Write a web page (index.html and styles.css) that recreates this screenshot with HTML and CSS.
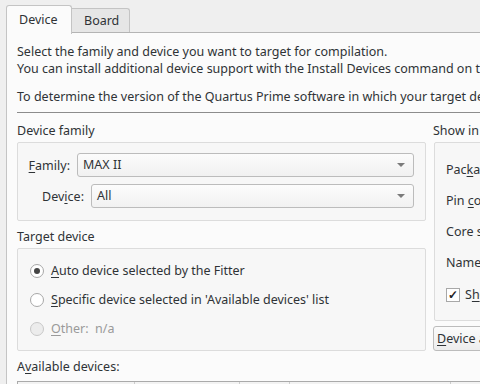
FILE: index.html
```html
<!DOCTYPE html>
<html lang="en">
<head>
  <meta charset="UTF-8">
  <title>Device</title>
  <link rel="stylesheet" href="styles.css">
</head>
<body>
  <!-- 탭 -->
  <div class="tabs">
    <div class="tab active">Device</div>
    <div class="tab">Board</div>
  </div>

  <div class="pane">
    <p class="intro">Select the family and device you want to target for compilation.<br>You can install additional device support with the Install Devices command on the Tools menu.</p>
    <p class="intro second">To determine the version of the Quartus Prime software in which your target device is supported, refer to the Device Support List webpage.</p>
    <hr class="sep">

    <div class="columns">
      <div class="left">
        <div class="group-title">Device family</div>
        <div class="group family-box">
          <div class="row">
            <label class="lbl"><u>F</u>amily:</label>
            <div class="combo">MAX II<span class="arrow"></span></div>
          </div>
          <div class="row">
            <label class="lbl">Dev<u>i</u>ce:</label>
            <div class="combo">All<span class="arrow"></span></div>
          </div>
        </div>

        <div class="group-title target-title">Target device</div>
        <div class="group target-box">
          <div class="radio-row"><span class="radio checked"></span><span><u>A</u>uto device selected by the Fitter</span></div>
          <div class="radio-row"><span class="radio"></span><span><u>S</u>pecific device selected in 'Available devices' list</span></div>
          <div class="radio-row disabled"><span class="radio"></span><span><u>O</u>ther:&nbsp; n/a</span></div>
        </div>

        <div class="group-title avail">A<u>v</u>ailable devices:</div>
        <div class="table-head">
          <div class="th" style="width:116px"></div>
          <div class="th" style="width:104px"></div>
          <div class="th" style="width:49px"></div>
          <div class="th" style="width:160px"></div>
        </div>
      </div>

      <div class="right">
        <div class="group-title">Show in 'Available devices' list</div>
        <div class="group show-box">
          <div class="opt">Pac<u>k</u>age:</div>
          <div class="opt">Pin <u>c</u>ount:</div>
          <div class="opt">Core speed grade:</div>
          <div class="opt">Name filter:</div>
          <div class="check-row"><span class="check">&#10003;</span><span>S<u>h</u>ow advanced devices</span></div>
        </div>
        <div class="button"><u>D</u>evice and Pin Options...</div>
      </div>
    </div>
  </div>
</body>
</html>
```

FILE: styles.css
```css
/* 공통 스타일 */
body {
  margin: 0;
  width: 480px;
  height: 384px;
  overflow: hidden;
  background-color: #efefef;
  font-family: 'Noto Sans', sans-serif;
  font-size: 12.5px;
  color: #2f3336;
}

u {
  text-decoration-thickness: 1px;
  text-underline-offset: 2px;
}

/* 탭 */
.tabs {
  display: flex;
  padding: 5px 0 0 6px;
  height: 27px;
  box-sizing: content-box;
}

.tab {
  margin-top: 3px;
  padding: 0 12px 0 12px;
  width: 33px;
  line-height: 24px;
  border: 1px solid #c4c4c4;
  border-bottom: none;
  border-left: none;
  border-radius: 0 3px 0 0;
  background-color: #e6e6e6;
}

.tab.active {
  margin-top: 0;
  line-height: 27px;
  width: 40px;
  border-left: 1px solid #c4c4c4;
  border-radius: 3px 3px 0 0;
  background-color: #fbfbfb;
  position: relative;
  z-index: 1;
  height: 28px;
}

.pane {
  margin-left: 6px;
  border-top: 1px solid #b4b4b4;
  border-left: 1px solid #c4c4c4;
  background-color: #fbfbfb;
  padding: 4px 0 0 10px;
  height: 360px;
  width: 600px;
  white-space: nowrap;
}

.intro {
  margin: 6px 0 0 0;
  line-height: 17px;
}

.intro.second {
  margin-top: 11px;
}

.sep {
  margin: 7px 0 0 0;
  border: none;
  border-top: 1px solid #8c8c8c;
}

/* 칼럼 */
.columns {
  display: flex;
  gap: 7px;
}

.left {
  width: 409px;
  flex: none;
}

.right {
  flex: none;
  width: 200px;
}

.group-title {
  margin-top: 9px;
  line-height: 18px;
  height: 20px;
}

.group {
  border: 1px solid #dcdcdc;
  border-radius: 2px;
  background-color: #f7f7f7;
  box-sizing: border-box;
}

.family-box {
  height: 79px;
  padding: 10px 11px 0 0;
}

.row {
  display: flex;
  align-items: center;
  margin-bottom: 7px;
}

.lbl {
  width: 52px;
  text-align: right;
}

.row:nth-child(2) .lbl {
  width: 66px;
}

.combo {
  flex: 1;
  margin-left: 7px;
  height: 24px;
  box-sizing: border-box;
  border: 1px solid #bcbcbc;
  border-radius: 3px;
  background: linear-gradient(#fcfcfc, #f1f1f1);
  padding-left: 5px;
  line-height: 22px;
  position: relative;
}

.arrow {
  position: absolute;
  right: 8px;
  top: 9px;
  border-left: 4px solid transparent;
  border-right: 4px solid transparent;
  border-top: 4px solid #7b7b7b;
}

.target-title {
  margin-top: 7px;
}

.target-box {
  height: 103px;
  padding-top: 7px;
}

.radio-row {
  display: flex;
  align-items: center;
  height: 29px;
  padding-left: 12px;
}

.radio {
  width: 12px;
  height: 12px;
  border: 1px solid #a8a8a8;
  border-radius: 50%;
  background-color: #fff;
  margin-right: 7px;
  position: relative;
}

.radio.checked::after {
  content: '';
  position: absolute;
  left: 3px;
  top: 3px;
  width: 6px;
  height: 6px;
  border-radius: 50%;
  background-color: #444;
}

.radio-row.disabled {
  color: #9a9a9a;
}

.radio-row.disabled .radio {
  background-color: #ececec;
  border-color: #c8c8c8;
}

.avail {
  margin-top: 7px;
}

/* 표 머리 */
.table-head {
  display: flex;
  width: 480px;
  margin-top: 3px;
  border-left: 1px solid #aaa;
  border-top: 1px solid #aaa;
  height: 12px;
  background-color: #f3f3f3;
}

.th {
  flex: none;
  border-right: 1px solid #ccc;
}

/* 오른쪽 */
.show-box {
  height: 179px;
  margin-left: 1px;
  padding: 11px 0 0 11px;
}

.opt {
  line-height: 31px;
}

.check-row {
  display: flex;
  align-items: center;
  margin-top: 8px;
}

.check {
  width: 12px;
  height: 12px;
  border: 1px solid #a8a8a8;
  background-color: #fff;
  font-size: 12px;
  font-weight: bold;
  line-height: 12px;
  text-align: center;
  margin-right: 5px;
  color: #222;
}

.button {
  margin-top: 5px;
  height: 25px;
  box-sizing: border-box;
  border: 1px solid #bcbcbc;
  border-radius: 3px;
  background: linear-gradient(#fbfbfb, #ededed);
  padding-left: 3px;
  line-height: 23px;
}
```
